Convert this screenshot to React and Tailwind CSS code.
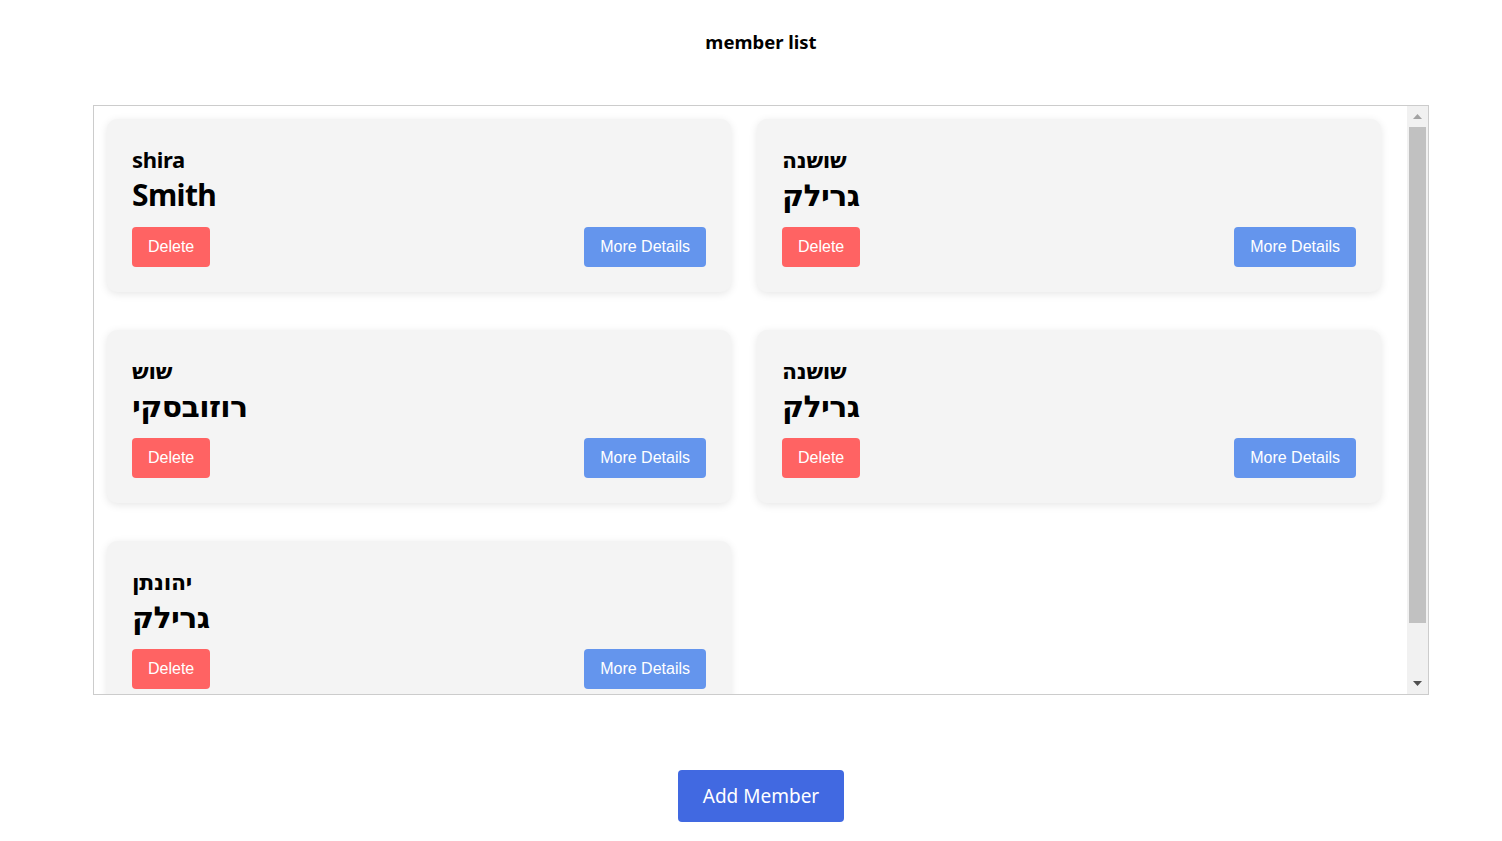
import React from "react";

const members = [
  { first: "shira", last: "Smith" },
  { first: "שושנה", last: "גרילק" },
  { first: "שוש", last: "רוזובסקי" },
  { first: "שושנה", last: "גרילק" },
  { first: "יהונתן", last: "גרילק" },
];

const sans = { fontFamily: '"Noto Sans", "DejaVu Sans", sans-serif' };

function Card({ m }) {
  return (
    <div className="bg-[#f4f4f4] rounded-[10px] shadow-[0_2px_8px_rgba(0,0,0,0.1)] px-[25px] pt-[25px] pb-[25px] flex flex-col">
      <div className="text-[22px] leading-[31px] tracking-[-0.3px] font-bold text-black font-['Noto_Sans','DejaVu_Sans',sans-serif]">
        {m.first}
      </div>
      <div className="text-[30px] leading-[40px] tracking-[-0.6px] font-bold text-black font-['Noto_Sans','DejaVu_Sans',sans-serif]">
        {m.last}
      </div>
      <div className="flex justify-between mt-[12px]">
        <button className="h-[40px] px-[16px] rounded-[4px] bg-[#ff6363] text-white text-[16px] font-['Liberation_Sans',Arial,sans-serif]">
          Delete
        </button>
        <button className="h-[40px] px-[16px] rounded-[4px] bg-[#6495ed] text-white text-[16px] font-['Liberation_Sans',Arial,sans-serif]">
          More Details
        </button>
      </div>
    </div>
  );
}

export default function App() {
  return (
    <div className="min-h-[841px] bg-white pl-[20px] flex flex-col items-center" style={sans}>
      <div className="pt-[28px] h-[56px] leading-[28px] text-[18.5px] font-bold text-black font-['Noto_Sans',sans-serif]">
        member list
      </div>
      <div className="mt-[49px] w-[1336px] h-[590px] border border-[#cccccc] flex">
        <div className="flex-1 overflow-hidden pl-[13px] pr-[26px] pt-[13px]">
          <div className="grid grid-cols-2 gap-x-[26px] gap-y-[38px]">
            {members.map((m, i) => (
              <Card key={i} m={m} />
            ))}
          </div>
        </div>
        <div className="w-[21px] bg-[#f1f1f1] flex flex-col items-center">
          <div className="h-[20px] w-full flex items-center justify-center">
            <svg width="9" height="5" viewBox="0 0 9 5">
              <polygon points="4.5,0 9,5 0,5" fill="#a3a3a3" />
            </svg>
          </div>
          <div className="mt-[1px] h-[496px] w-[17px] bg-[#c1c1c1]" />
          <div className="flex-1 w-full flex items-end justify-center pb-[8px]">
            <svg width="9" height="5" viewBox="0 0 9 5">
              <polygon points="0,0 9,0 4.5,5" fill="#505050" />
            </svg>
          </div>
        </div>
      </div>
      <button className="mt-[75px] w-[166px] h-[52px] rounded-[4px] bg-[#4169e1] text-white text-[19px] font-['Noto_Sans',sans-serif]">
        Add Member
      </button>
    </div>
  );
}
